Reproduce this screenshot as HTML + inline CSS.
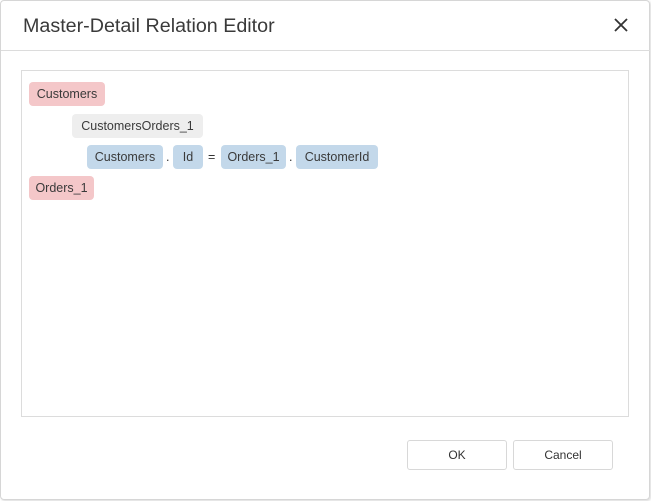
<!DOCTYPE html>
<html><head><style>
body{margin:0;width:651px;height:501px;background:#fff;font-family:"Liberation Sans",sans-serif;overflow:hidden;position:relative}
.dlg{position:absolute;left:0;top:0;width:648px;height:498px;border:1px solid #d6d6d6;border-radius:4px;box-shadow:1px 1px 2px rgba(0,0,0,.15)}
.title{position:absolute;left:22px;top:14px;font-size:19.7px;color:#3a3a3a}
.hr{position:absolute;left:0;top:49px;width:649px;height:1px;background:#dcdcdc}
.close{position:absolute;left:612px;top:16px}
.box{position:absolute;left:21px;top:70px;width:606px;height:345px;border:1px solid #dcdcdc}
.c{position:absolute;height:24px;line-height:24px;font-size:12.5px;color:#3a3a3a;border-radius:4px;text-align:center}
.r{background:#f4c7c9}.g{background:#eeeeee}.b{background:#c3d8ea}
.t{position:absolute;font-size:12.5px;color:#333;line-height:24px}
.btn{position:absolute;top:440px;width:98px;height:28px;border:1px solid #d8d8d8;border-radius:3px;font-size:12px;line-height:28px;text-align:center;color:#333}
</style></head><body>
<div class="dlg">
<div class="title">Master-Detail Relation Editor</div>
<svg class="close" width="16" height="16" viewBox="0 0 16 16"><path d="M2 2L14 14M14 2L2 14" stroke="#333" stroke-width="1.8"/></svg>
<div class="hr"></div>
</div>
<div class="box"></div>
<div class="c r" style="left:29px;top:82px;width:76px">Customers</div>
<div class="c g" style="left:72px;top:114px;width:131px">CustomersOrders_1</div>
<div class="c b" style="left:87px;top:145px;width:76px">Customers</div>
<div class="t" style="left:166px;top:145px">.</div>
<div class="c b" style="left:173px;top:145px;width:30px">Id</div>
<div class="t" style="left:208px;top:145px">=</div>
<div class="c b" style="left:221px;top:145px;width:65px">Orders_1</div>
<div class="t" style="left:289px;top:145px">.</div>
<div class="c b" style="left:296px;top:145px;width:82px">CustomerId</div>
<div class="c r" style="left:29px;top:176px;width:65px">Orders_1</div>
<div class="btn" style="left:407px">OK</div>
<div class="btn" style="left:513px">Cancel</div>
</body></html>
